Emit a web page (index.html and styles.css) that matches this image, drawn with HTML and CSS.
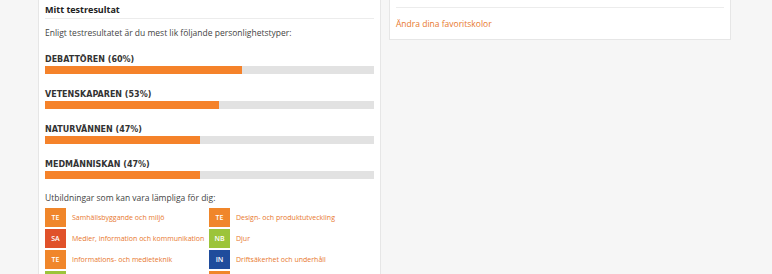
FILE: index.html
```html
<!DOCTYPE html>
<html lang="sv">
<head>
<meta charset="utf-8">
<link rel="stylesheet" href="styles.css">
</head>
<body>
<div class="page">
  <section class="card result">
    <h2 class="card-title">Mitt testresultat</h2>
    <p class="intro">Enligt testresultatet är du mest lik följande personlighetstyper:</p>
    <div class="type">
      <h3 class="type-name">DEBATTÖREN (60%)</h3>
      <div class="bar"><div class="fill" style="width:60%"></div></div>
    </div>
    <div class="type">
      <h3 class="type-name">VETENSKAPAREN (53%)</h3>
      <div class="bar"><div class="fill" style="width:53%"></div></div>
    </div>
    <div class="type">
      <h3 class="type-name">NATURVÄNNEN (47%)</h3>
      <div class="bar"><div class="fill" style="width:47%"></div></div>
    </div>
    <div class="type">
      <h3 class="type-name">MEDMÄNNISKAN (47%)</h3>
      <div class="bar"><div class="fill" style="width:47%"></div></div>
    </div>
    <p class="intro edu-intro">Utbildningar som kan vara lämpliga för dig:</p>
    <ul class="edu">
      <li><span class="badge te">TE</span><a href="#">Samhällsbyggande och miljö</a></li>
      <li><span class="badge te">TE</span><a href="#">Design- och produktutveckling</a></li>
      <li><span class="badge sa">SA</span><a href="#">Medier, information och kommunikation</a></li>
      <li><span class="badge nb">NB</span><a href="#">Djur</a></li>
      <li><span class="badge te">TE</span><a href="#">Informations- och medieteknik</a></li>
      <li><span class="badge in">IN</span><a href="#">Driftsäkerhet och underhåll</a></li>
      <li><span class="badge nb"></span></li>
      <li><span class="badge te"></span></li>
    </ul>
  </section>
  <aside class="card side">
    <div class="side-row"><a href="#">Ändra dina favoritskolor</a></div>
  </aside>
</div>
</body>
</html>
```
FILE: styles.css
```css
html, body {
  margin: 0;
  padding: 0;
  background: #f6f6f6;
  font-family: "Open Sans", "Noto Sans", sans-serif;
  color: #333;
  overflow: hidden;
}
.page {
  display: flex;
  align-items: flex-start;
  gap: 8px;
  padding-left: 38px;
}
.card {
  background: #fff;
  border: 1px solid #e6e6e6;
  border-top: none;
  box-sizing: border-box;
}
.result {
  width: 343px;
  padding: 3px 6px 20px 6px;
  height: 300px;
}
.card-title {
  margin: 0;
  font-size: 9px;
  font-weight: 700;
  line-height: 14px;
  color: #222;
  padding-bottom: 1px;
  border-bottom: 1px solid #ececec;
}
.intro {
  margin: 8px 0 0;
  font-size: 8.5px;
  line-height: 12px;
  color: #444;
}
.type {
  margin-top: 15px;
}
.type-name {
  margin: 0 0 1px;
  font-family: "DejaVu Sans", sans-serif;
  font-size: 8px;
  font-weight: 700;
  line-height: 11px;
  color: #333;
}
.bar {
  height: 8px;
  background: #e2e2e2;
}
.fill {
  height: 100%;
  background: #f5822a;
}
.edu-intro {
  margin-top: 13px;
}
.edu {
  list-style: none;
  margin: 4px 0 0;
  padding: 0;
  display: grid;
  grid-template-columns: 164px 1fr;
  row-gap: 2px;
}
.edu li {
  display: flex;
  align-items: center;
  gap: 6px;
  height: 19px;
  white-space: nowrap;
}
.badge {
  width: 21px;
  height: 19px;
  display: flex;
  align-items: center;
  justify-content: center;
  color: #fff;
  font-size: 7px;
  font-weight: 600;
  flex: none;
}
.te { background: #f0862a; }
.sa { background: #e0512a; }
.nb { background: #9cc43a; }
.in { background: #1f4c9c; }
.edu a {
  color: #e8782e;
  text-decoration: none;
  font-size: 7px;
}
.side {
  width: 342px;
  padding: 7px 6px 0 6px;
  height: 40px;
}
.side-row {
  border-top: 1px solid #ececec;
  padding-top: 10px;
  font-size: 8.5px;
  line-height: 12px;
}
.side a {
  color: #e8782e;
  text-decoration: none;
}
```
